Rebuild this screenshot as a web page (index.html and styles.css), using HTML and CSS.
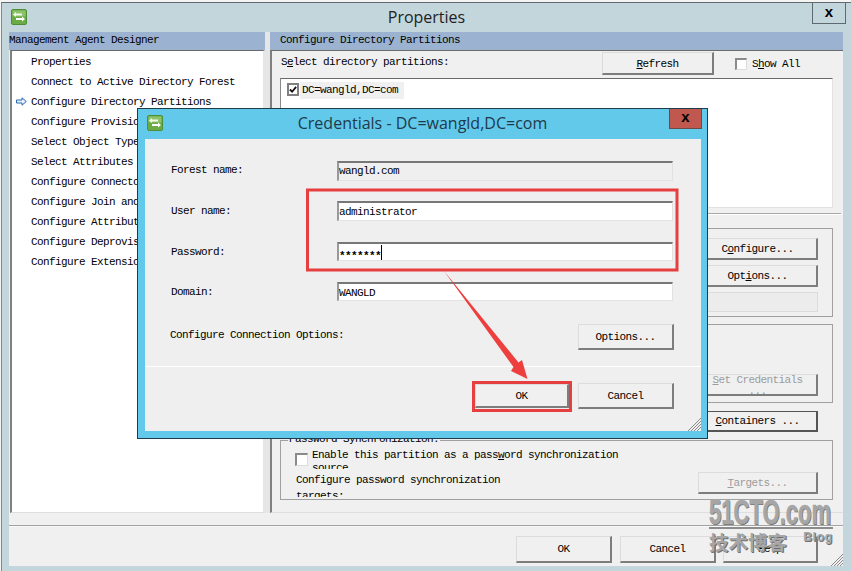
FILE: index.html
```html
<!DOCTYPE html>
<html lang="en">
<head>
<meta charset="utf-8">
<title>Properties</title>
<link rel="stylesheet" href="styles.css">
</head>
<body>
<svg class="defs" width="0" height="0" aria-hidden="true">
  <symbol id="app-icon" viewBox="0 0 16 16">
    <rect x="0.5" y="0.5" width="15" height="15" rx="1.5" fill="#6bab46" stroke="#4d8f36"/>
    <rect x="1.5" y="1.5" width="13" height="6" fill="#8cc26a"/>
    <path d="M2 5.5 L5 3 V4.5 H11 V6.5 H5 V8 Z" fill="#f1f8e6"/>
    <path d="M14 10 L11 7.5 V9 H5 V11 H11 V12.5 Z" fill="#ffffff"/>
  </symbol>
</svg>

<section class="window">
  <header class="titlebar">
    <svg class="app-icon"><use href="#app-icon"/></svg>
    <h1 class="title">Properties</h1>
    <div class="close">x</div>
  </header>
  <div class="client">
    <div class="panes">
      <div class="pane-col">
        <div class="band">Management Agent Designer</div>
        <ul class="steps">
          <li class="step">Properties</li>
          <li class="step">Connect to Active Directory Forest</li>
          <li class="step current"><svg class="step-arrow" viewBox="0 0 11 9"><path d="M0.5 3 H6 V0.8 L10.3 4.5 L6 8.2 V6 H0.5 Z" fill="#e6f0fb" stroke="#2a68b4"/></svg>Configure Directory Partitions</li>
          <li class="step">Configure Provisioning Hierarchy</li>
          <li class="step">Select Object Types</li>
          <li class="step">Select Attributes</li>
          <li class="step">Configure Connector Filter</li>
          <li class="step">Configure Join and Projection Rules</li>
          <li class="step">Configure Attribute Flow</li>
          <li class="step">Configure Deprovisioning</li>
          <li class="step">Configure Extensions</li>
        </ul>
      </div>
      <div class="splitter"></div>
      <div class="pane-col">
        <div class="band">Configure Directory Partitions</div>
        <div class="page">
          <div class="select-row">
            <span class="select-label">S<u>e</u>lect directory partitions:</span>
            <button class="btn refresh"><u>R</u>efresh</button>
            <span class="check"></span>
            <span class="show-all">S<u>h</u>ow All</span>
          </div>
          <div class="listbox">
            <span class="check checked"><svg viewBox="0 0 9 9"><path d="M1 4.5 L3.5 7 L8 1.5" fill="none" stroke="#111" stroke-width="2"/></svg></span>
            <span class="list-label">DC=wangld,DC=com</span>
          </div>
          <div class="rule"></div>
          <div class="group group-first">
            <button class="btn wide">C<u>o</u>nfigure...</button>
            <button class="btn wide">Opt<u>i</u>ons...</button>
            <div class="blank-field"></div>
          </div>
          <div class="group group-cred">
            <button class="btn wide disabled cred"><u>S</u>et Credentials<br>...</button>
          </div>
          <div class="containers-row">
            <button class="btn wide default"><u>C</u>ontainers ...</button>
          </div>
          <div class="group group-sync">
            <span class="legend">Password Synchronization:</span>
            <div class="sync-top">
              <span class="check sync-check"></span>
              <span class="sync-text">Enable this partition as a pass<u>w</u>ord synchronization source</span>
            </div>
            <div class="sync-bottom">
              <span class="sync-config">Configure password synchronization targets:</span>
              <button class="btn wide disabled"><u>T</u>argets...</button>
            </div>
          </div>
        </div>
      </div>
    </div>
    <div class="status-gap"></div>
    <footer class="footer">
      <button class="btn foot">OK</button>
      <button class="btn foot">Cancel</button>
      <button class="btn foot help">Help</button>
      <svg class="grip" viewBox="0 0 12 12"><path d="M12 0 L0 12 M12 3 L3 12 M12 6 L6 12 M12 9 L9 12" stroke="#8a8a8a" fill="none"/></svg>
    </footer>
  </div>
</section>

<section class="dialog">
  <header class="dlg-titlebar">
    <svg class="app-icon"><use href="#app-icon"/></svg>
    <h2 class="dlg-title">Credentials - DC=wangld,DC=com</h2>
    <div class="dlg-close">x</div>
  </header>
  <div class="dlg-body">
    <div class="form">
      <label class="form-label first">Forest name:</label>
      <div class="field readonly">wangld.com</div>
      <label class="form-label">User name:</label>
      <div class="field">administrator</div>
      <label class="form-label nudge">Password:</label>
      <div class="field nudge"><span class="caret">*******</span></div>
      <label class="form-label nudge">Domain:</label>
      <div class="field nudge">WANGLD</div>
    </div>
    <div class="conn-row">
      <span class="conn-label">Configure Connection Options:</span>
      <button class="btn dlg-btn tall">Options...</button>
    </div>
    <div class="dlg-rule"></div>
    <div class="dlg-actions">
      <button class="btn dlg-ok">OK</button>
      <button class="btn dlg-btn tall">Cancel</button>
    </div>
    <svg class="grip dlg-grip" viewBox="0 0 13 13"><path d="M13 0 L0 13 M13 3 L3 13 M13 6 L6 13 M13 9 L9 13" stroke="#8a8a8a" fill="none"/></svg>
  </div>
</section>

<svg class="annotations" viewBox="0 0 851 571" aria-hidden="true">
  <rect x="307.5" y="190" width="369.5" height="80" fill="none" stroke="#e53f40" stroke-width="3"/>
  <rect x="473.5" y="382.5" width="97" height="28" fill="none" stroke="#e53f40" stroke-width="3"/>
  <polygon points="444,271 518.5,362.5 522,360 527.5,379 511,371 513.5,367" fill="#ee3f3f"/>
</svg>

<div class="watermark">
  <div class="wm-logo"><span class="wm-logo-text">51CTO.com</span></div>
  <div class="wm-line"></div>
  <div class="wm-sub"><span class="wm-cn">技术博客</span><span class="wm-blog">Blog</span></div>
</div>
</body>
</html>
```
FILE: styles.css
```css
* { box-sizing: border-box; }
html, body { margin: 0; padding: 0; }
body {
  position: relative;
  width: 851px;
  height: 571px;
  overflow: hidden;
  background: #f4f4f2;
  font-family: "Liberation Mono", "Noto Sans CJK SC", monospace;
  font-size: 11px;
  letter-spacing: -0.6px;
  color: #000;
}
.defs { position: absolute; }
u { text-underline-offset: 1px; }

/* outer window */
.window {
  position: absolute;
  left: 1px; top: 2px; right: 0; bottom: 0;
  display: flex;
  flex-direction: column;
  background: #c3d6dc;
  border-top: 1px solid #5e6a70;
  border-left: 1px solid #7c8a90;
  padding: 0 8px 5px 7px;
}
.titlebar {
  display: grid;
  grid-template-columns: 1fr auto 1fr;
  height: 29px;
  flex: none;
  margin-left: -7px;
  margin-right: -8px;
}
.app-icon { width: 16px; height: 16px; display: block; }
.titlebar .app-icon { margin: 6px 0 0 9px; }
.title {
  margin: 2px 0 0;
  font: 400 16px/24px "Open Sans", sans-serif;
  letter-spacing: 0;
  color: #222;
}
.close {
  justify-self: end;
  width: 34px;
  height: 21px;
  margin-right: 5px;
  border: 1px solid #5e6a70;
  border-top: 0;
  text-align: center;
  font: 700 15px/17px "Liberation Sans", sans-serif;
  letter-spacing: 0;
}
.client {
  flex: 1;
  display: flex;
  flex-direction: column;
  background: #f0f0f0;
  min-height: 0;
}
.panes {
  display: grid;
  grid-template-columns: 256px 5px 573px;
  height: 481px;
  flex: none;
}
.pane-col { display: flex; flex-direction: column; min-height: 0; }
.band {
  height: 18px;
  flex: none;
  background: #9bb3d0;
  line-height: 16px;
  padding-left: 0;
  white-space: nowrap;
}
.pane-col + .splitter + .pane-col .band { padding-left: 10px; }
.splitter { background: #e6e6e6; }
.steps {
  flex: 1;
  list-style: none;
  margin: 0 0 0 1px;
  padding: 0;
  background: #fff;
  border-top: 1px solid #6a6a6a;
  border-left: 2px solid #808080;
  border-bottom: 1px solid #dedede;
  border-right: 2px solid #e6e6e6;
  overflow: hidden;
}
.step {
  position: relative;
  height: 20px;
  line-height: 22px;
  padding-left: 19px;
  white-space: nowrap;
}
.step-arrow {
  position: absolute;
  left: 4px; top: 6px;
  width: 11px; height: 9px;
}
.page {
  flex: 1;
  min-height: 0;
  border-top: 1px solid #6a6a6a;
  border-left: 2px solid #808080;
  border-bottom: 1px solid #dedede;
  padding: 1px 0 0 8px;
  background: #f0f0f0;
}

/* buttons */
.btn {
  display: block;
  padding: 0;
  margin: 0;
  background: #f0f0f0;
  border: 1px solid #dcdcdc;
  border-right: 2px solid #7d7d7d;
  border-bottom: 2px solid #7d7d7d;
  font: inherit;
  letter-spacing: inherit;
  color: #000;
  overflow: hidden;
  line-height: 18px;
}
.wide { width: 120px; height: 22px; }
.disabled { color: #9c9c9c; }
.cred { line-height: 11px; }
.default { border: 1px solid #555; border-right-width: 2px; border-bottom-width: 2px; height: 21px; }
.refresh { width: 112px; height: 23px; margin-left: 160px; line-height: 22px; }

.select-row {
  display: flex;
  align-items: center;
  height: 23px;
}
.select-label { width: 161px; margin: -3px 0 0 1px; white-space: nowrap; }
.check {
  display: block;
  flex: none;
  width: 12px; height: 12px;
  background: #fff;
  border: 2px solid #8a8a8a;
  border-right: 1px solid #dcdcdc;
  border-bottom: 1px solid #dcdcdc;
}
.select-row .check { margin-left: 21px; }
.show-all { margin-left: 5px; white-space: nowrap; }
.listbox {
  display: flex;
  align-items: flex-start;
  height: 130px;
  width: 553px;
  margin-top: 3px;
  padding: 3px 0 0 6px;
  background: #fff;
  border-top: 1px solid #6a6a6a;
  border-left: 1px solid #8a8a8a;
  border-right: 1px solid #e2e2e2;
  border-bottom: 1px solid #e2e2e2;
}
.check.checked { width: 12px; height: 13px; margin-top: 1px; border: 2px solid #808080; }
.check.checked svg { display: block; width: 8px; height: 9px; }
.list-label { margin-left: 1px; padding: 0 6px 0 2px; height: 17px; line-height: 16px; background: #f0f0f0; white-space: nowrap; }
.rule {
  height: 2px;
  margin: 5px 2px 0 0;
  background: #a8a8a8;
  border-bottom: 1px solid #fff;
}
.group {
  position: relative;
  width: 553px;
  border: 1px solid #a0a0a0;
  display: flex;
  flex-direction: column;
  align-items: flex-end;
  padding-right: 14px;
}
.group-first { height: 89px; margin-top: 13px; padding-top: 9px; gap: 5px; }
.blank-field { width: 120px; height: 20px; border: 1px solid #dcdcdc; background: #ececec; }
.group-cred { height: 79px; margin-top: 7px; padding-top: 49px; }
.containers-row { display: flex; justify-content: flex-end; width: 538px; margin-top: 8px; }
.group-sync { height: 60px; margin-top: 8px; align-items: stretch; padding: 0 14px 0 0; }
.legend {
  position: absolute;
  left: 7px; top: -9px;
  padding: 0 1px;
  background: #f0f0f0;
  white-space: nowrap;
  line-height: 14px;
}
.sync-top { display: flex; padding: 8px 0 0 14px; height: 25px; flex: none; }
.sync-check { width: 13px; height: 13px; margin-top: 4px; }
.sync-text { width: 318px; margin-left: 4px; height: 20px; overflow: hidden; line-height: 13px; }
.sync-bottom { display: flex; justify-content: space-between; padding: 6px 0 0 15px; height: 34px; flex: none; }
.sync-config { width: 220px; height: 25px; line-height: 16px; overflow: hidden; }

.status-gap { height: 13px; flex: none; border-bottom: 1px solid #a2a2a2; }
.footer {
  position: relative;
  flex: 1;
  display: flex;
  padding: 9px 0 0 507px;
  border-top: 1px solid #f8f8f8;
}
.foot { width: 96px; height: 27px; margin-right: 8px; line-height: 24px; }
.help { width: 95px; margin: 0 0 0 -1px; }
.grip { position: absolute; width: 12px; height: 12px; right: 0; bottom: 0; }

/* credentials dialog */
.dialog {
  position: absolute;
  left: 137px; top: 108px;
  width: 571px; height: 331px;
  display: flex;
  flex-direction: column;
  background: #62c9ea;
  border: 1px solid #1e3d4a;
  padding: 0 6px 7px 7px;
}
.dlg-titlebar {
  display: grid;
  grid-template-columns: 1fr auto 1fr;
  height: 30px;
  flex: none;
  margin: 0 -6px 0 -7px;
}
.dlg-titlebar .app-icon { margin: 6px 0 0 9px; }
.dlg-title {
  margin: 2px 0 0;
  font: 400 16px/25px "Open Sans", sans-serif;
  letter-spacing: 0;
  color: #1f3a4a;
}
.dlg-close {
  justify-self: end;
  width: 33px; height: 20px;
  margin-right: 5px;
  background: #c0584f;
  border: 1px solid #6c4a45;
  border-top: 0;
  text-align: center;
  font: 700 15px/16px "Liberation Sans", sans-serif;
  letter-spacing: 0;
  color: #000;
}
.dlg-body {
  position: relative;
  flex: 1;
  background: #efefef;
  padding-top: 22px;
}
.form {
  display: grid;
  grid-template-columns: 192px 336px;
  grid-auto-rows: 20px;
  row-gap: 20px;
}
.form-label { padding-left: 26px; line-height: 20px; }
.form-label.first { line-height: 18px; }
.nudge { margin-top: 1px; }
.field {
  background: #fff;
  border-top: 2px solid #777;
  border-left: 2px solid #999;
  border-right: 1px solid #e2e2e2;
  border-bottom: 1px solid #e2e2e2;
  line-height: 18px;
  white-space: nowrap;
}
.field.readonly { background: #efefef; line-height: 17px; }
.caret {
  display: inline-block;
  height: 15px;
  line-height: 22px;
  font-weight: 700;
  overflow: hidden;
  vertical-align: top;
  margin-top: 1px;
  border-right: 1px solid #000;
}
.conn-row {
  display: flex;
  align-items: flex-start;
  justify-content: space-between;
  width: 529px;
  margin-top: 23px;
  padding-left: 25px;
}
.conn-label { margin-top: 3px; line-height: 16px; }
.dlg-btn { width: 96px; }
.tall { height: 26px; line-height: 24px; }
.dlg-rule { height: 1px; background: #fff; margin-top: 16px; }
.dlg-actions {
  display: flex;
  justify-content: flex-end;
  align-items: center;
  gap: 9px;
  width: 529px;
  margin-top: 16px;
}
.dlg-ok { width: 94px; height: 24px; line-height: 22px; }
.dlg-grip { width: 13px; height: 13px; }

/* annotation overlay */
.annotations {
  position: absolute;
  left: 0; top: 0;
  width: 851px; height: 571px;
  pointer-events: none;
}

/* watermark */
.watermark {
  position: absolute;
  left: 709px; top: 497px;
  width: 124px;
  color: #a6a6a6;
  letter-spacing: 0;
  font-family: "Liberation Sans", "Noto Sans CJK SC", sans-serif;
  text-shadow: 1px 1px 0 #6f6f6f;
}
.wm-logo { height: 30px; }
.wm-logo-text {
  display: block;
  width: 195px;
  font-size: 35px;
  font-weight: 700;
  line-height: 30px;
  -webkit-text-stroke: 0.6px #a6a6a6;
  transform: scaleX(0.63);
  transform-origin: left center;
}
.wm-line { height: 2px; background: #8c8c8c; }
.wm-sub { display: flex; justify-content: space-between; }
.wm-cn { font-family: "Noto Sans CJK SC", sans-serif; font-size: 19.5px; font-weight: 700; line-height: 26px; }
.wm-blog { font-size: 12px; font-weight: 700; line-height: 16px; letter-spacing: 0.8px; }
```
